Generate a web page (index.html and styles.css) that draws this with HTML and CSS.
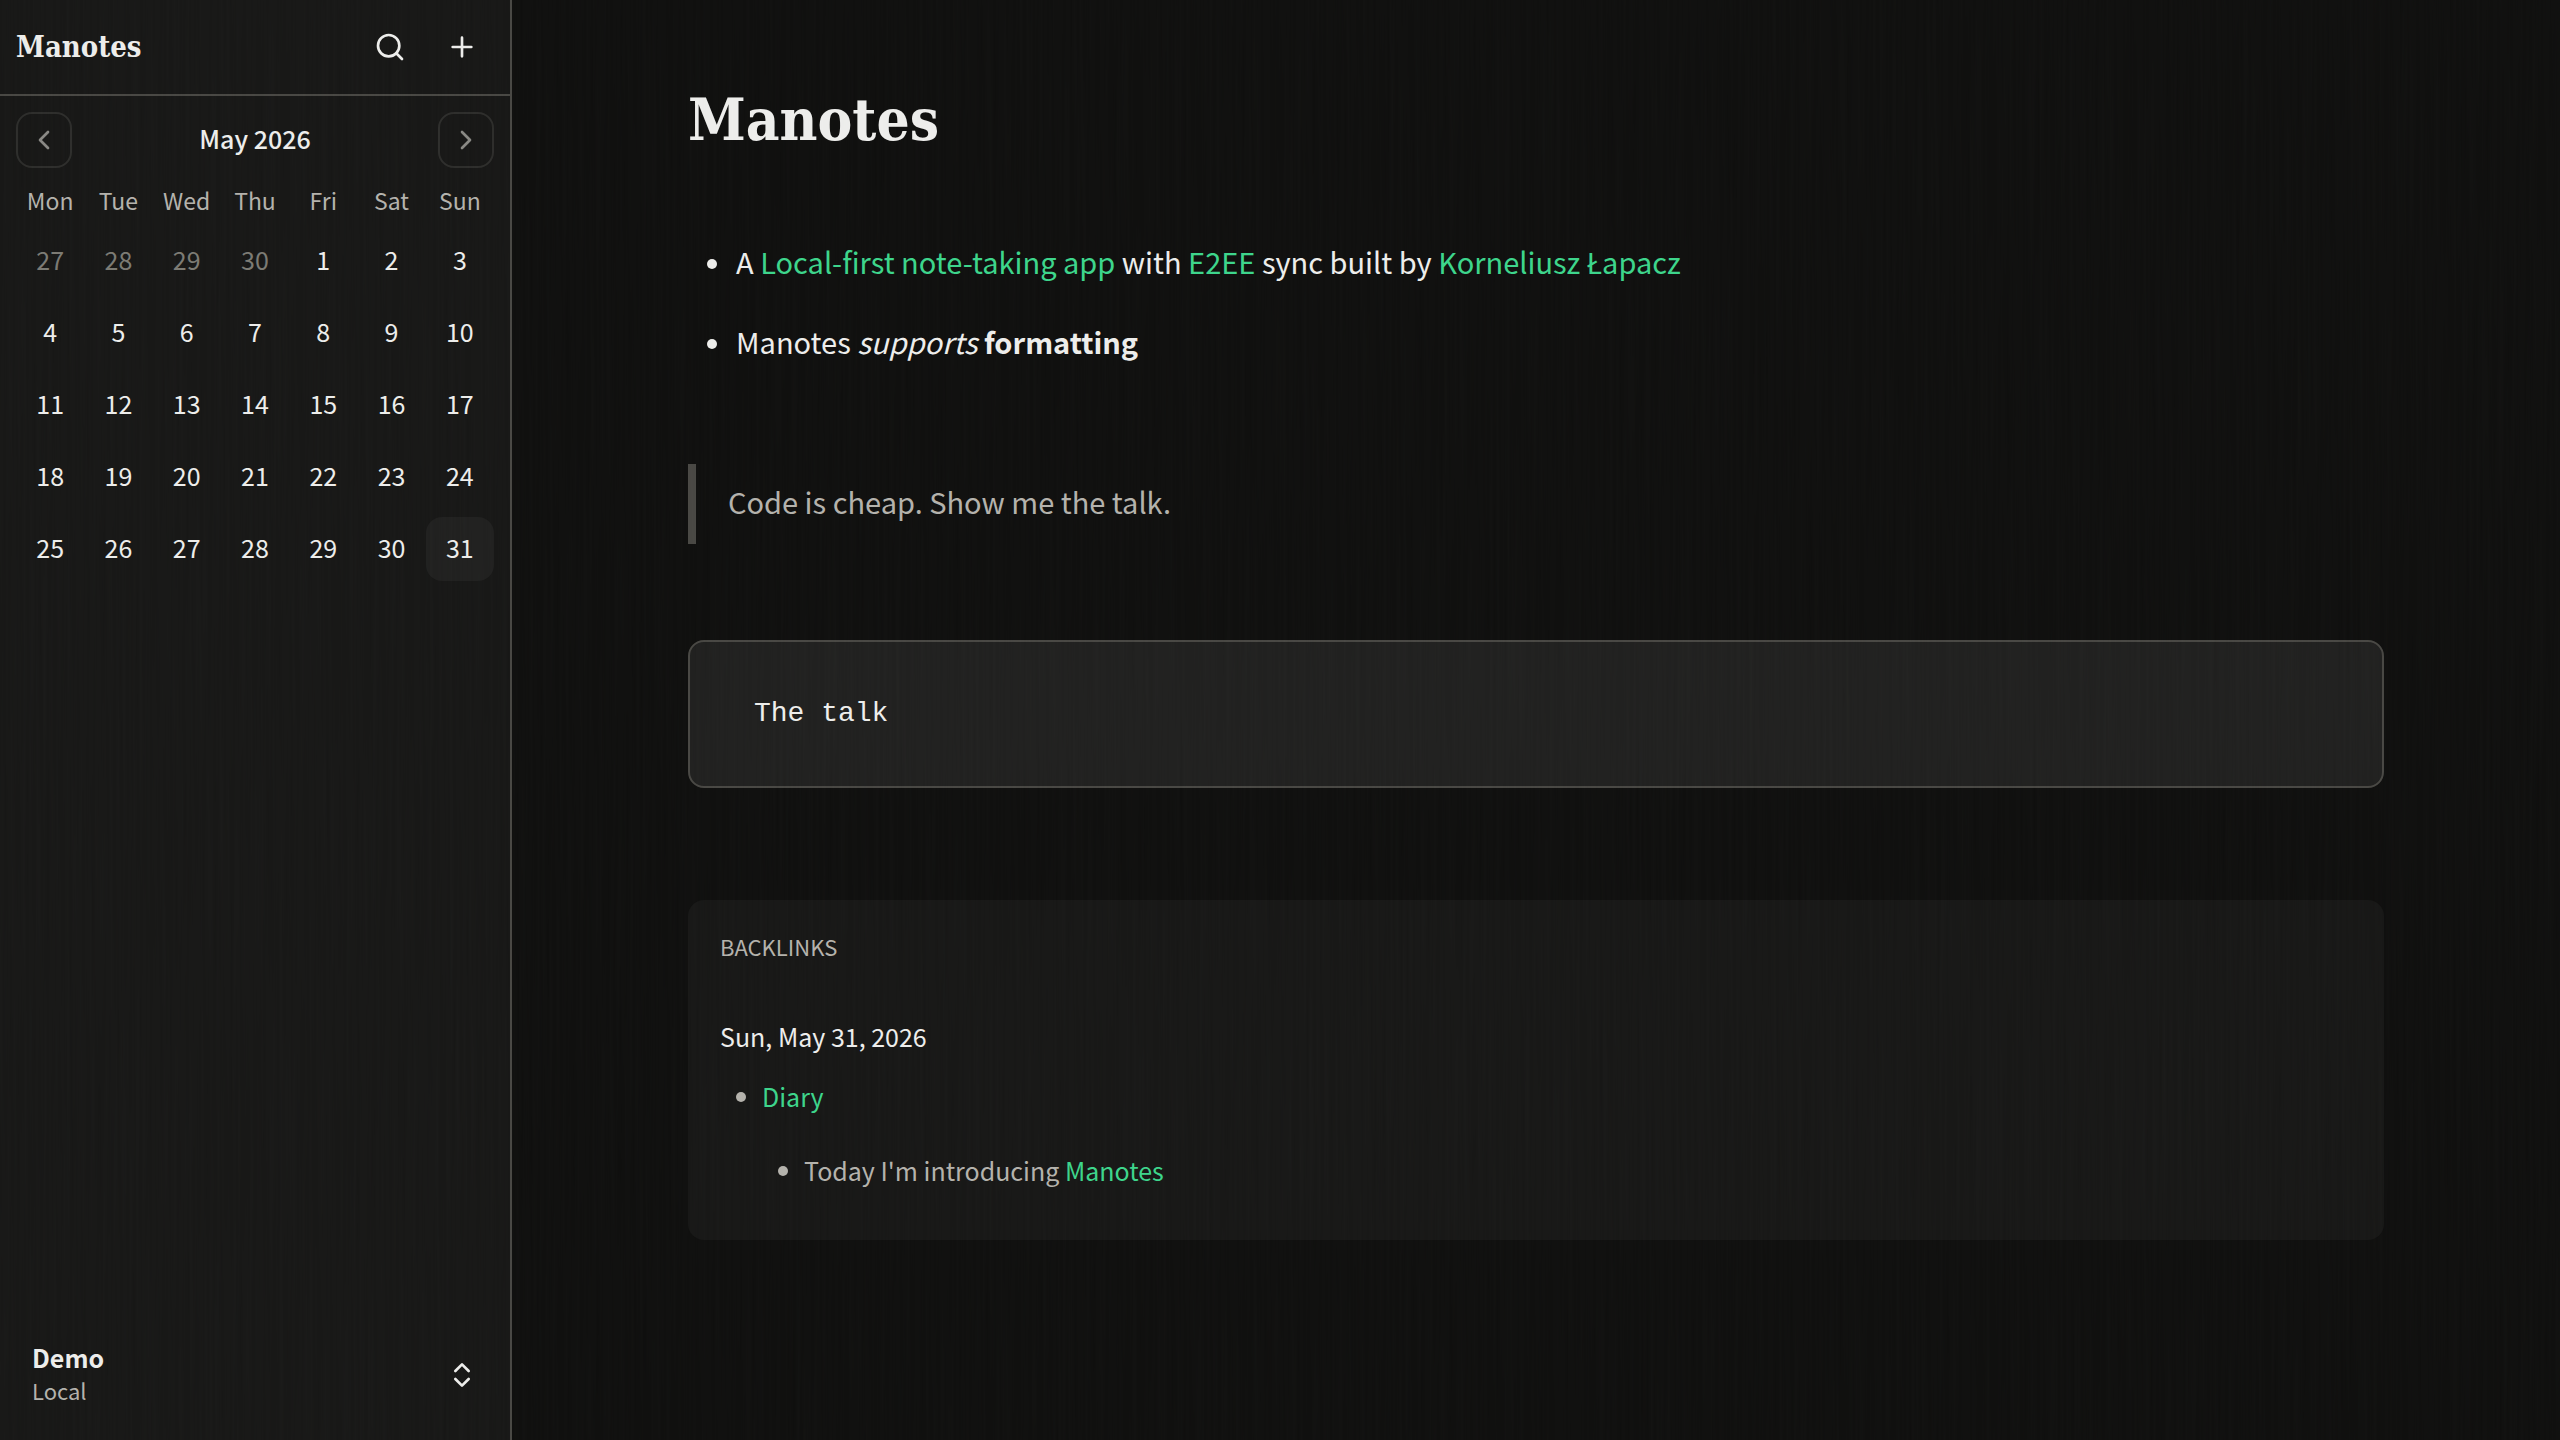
FILE: index.html
```html
<!DOCTYPE html>
<html lang="en">

<head>
  <meta charset="UTF-8" />
  <meta name="viewport" content="width=device-width, initial-scale=1.0" />
  <title>Manotes</title>
  <link rel="stylesheet" href="styles.css">
</head>

<body>
  <div class="app">
    <aside class="sidebar">
      <header class="sidebar-header">
        <a class="brand" href="#">Manotes</a>
        <button type="button" class="icon-button" aria-label="Search">
          <svg class="icon" viewBox="0 0 24 24"><circle cx="11" cy="11" r="8" /><path d="m21 21-4.3-4.3" /></svg>
        </button>
        <button type="button" class="icon-button" aria-label="New note">
          <svg class="icon" viewBox="0 0 24 24"><path d="M5 12h14M12 5v14" /></svg>
        </button>
      </header>

      <section class="calendar">
        <div class="calendar-nav">
          <button type="button" class="month-button" aria-label="Previous month">
            <svg class="icon" viewBox="0 0 24 24"><path d="m15 18-6-6 6-6" /></svg>
          </button>
          <span class="month">May 2026</span>
          <button type="button" class="month-button" aria-label="Next month">
            <svg class="icon" viewBox="0 0 24 24"><path d="m9 18 6-6-6-6" /></svg>
          </button>
        </div>
        <table class="days">
          <thead>
            <tr>
              <th>Mon</th>
              <th>Tue</th>
              <th>Wed</th>
              <th>Thu</th>
              <th>Fri</th>
              <th>Sat</th>
              <th>Sun</th>
            </tr>
          </thead>
          <tbody id="days"></tbody>
        </table>
      </section>

      <button type="button" class="account">
        <span class="account-text">
          <span class="account-name">Demo</span>
          <span class="account-type">Local</span>
        </span>
        <svg class="icon" viewBox="0 0 24 24"><path d="m7 15 5 5 5-5M7 9l5-5 5 5" /></svg>
      </button>
    </aside>

    <main class="note">
      <h1>Manotes</h1>

      <ul class="note-list">
        <li>A <a href="#">Local-first note-taking app</a> with <a href="#">E2EE</a> sync built by <a href="#">Korneliusz Łapacz</a></li>
        <li>Manotes <em>supports</em> <strong>formatting</strong></li>
      </ul>

      <blockquote>Code is cheap. Show me the talk.</blockquote>

      <pre><code>The talk</code></pre>

      <section class="backlinks">
        <h2>Backlinks</h2>
        <h3>Sun, May 31, 2026</h3>
        <ul>
          <li><a href="#">Diary</a>
            <ul>
              <li>Today I'm introducing <a href="#">Manotes</a></li>
            </ul>
          </li>
        </ul>
      </section>
    </main>
  </div>

  <!-- wood grain over the whole page -->
  <svg class="grain" aria-hidden="true">
    <filter id="grain">
      <feTurbulence type="fractalNoise" baseFrequency="0.3 0.004" numOctaves="3" seed="4" />
      <feColorMatrix type="saturate" values="0.3" />
    </filter>
    <rect width="100%" height="100%" filter="url(#grain)" />
  </svg>

  <script>
    const tbody = document.getElementById("days");
    const start = new Date(2026, 3, 27);

    for (let week = 0; week < 5; week++) {
      const row = document.createElement("tr");
      for (let day = 0; day < 7; day++) {
        const date = new Date(2026, 3, start.getDate() + week * 7 + day);
        const button = document.createElement("button");
        button.type = "button";
        button.className = "day";
        button.textContent = date.getDate();
        if (date.getMonth() !== 4) button.classList.add("outside");
        if (date.getMonth() === 4 && date.getDate() === 31) button.classList.add("today");

        const cell = document.createElement("td");
        cell.appendChild(button);
        row.appendChild(cell);
      }
      tbody.appendChild(row);
    }
  </script>
</body>

</html>
```
FILE: styles.css
```css
:root {
  --bg: #10100f;
  --panel: #181817;
  --raised: #212120;
  --border: #494844;
  --border-soft: #2e2e2c;
  --text: #eeeeec;
  --muted: #b5b3ad;
  --dim: #7c7b74;
  --link: #3dd68c;
}

* {
  box-sizing: border-box;
}

body {
  margin: 0;
  background: var(--bg);
  color: var(--text);
  font-family: "Noto Sans CJK SC", "Noto Sans", sans-serif;
  font-size: 29px;
  line-height: 42px;
}

button {
  padding: 0;
  border: none;
  background: none;
  color: inherit;
  font: inherit;
  cursor: pointer;
}

a {
  color: var(--link);
  text-decoration: none;
}

.app {
  display: flex;
  min-height: 100vh;
}

.icon {
  display: block;
  width: 32px;
  height: 32px;
  fill: none;
  stroke: currentColor;
  stroke-width: 2;
  stroke-linecap: round;
  stroke-linejoin: round;
}

/* Sidebar */
.sidebar {
  display: flex;
  flex-direction: column;
  flex: 0 0 512px;
  background: var(--panel);
  border-right: 2px solid var(--border);
  font-size: 25px;
  line-height: 40px;
}

.sidebar-header {
  display: flex;
  align-items: center;
  gap: 8px;
  height: 96px;
  padding: 0 16px;
  border-bottom: 2px solid var(--border);
}

.brand {
  flex: 1;
  color: var(--text);
  font-family: "DejaVu Serif Condensed", "DejaVu Serif", serif;
  font-size: 29px;
  font-weight: bold;
}

.icon-button {
  display: grid;
  place-items: center;
  width: 64px;
  height: 64px;
}

.calendar {
  padding: 16px;
}

.calendar-nav {
  display: flex;
  align-items: center;
  justify-content: space-between;
  margin-bottom: 8px;
}

.month {
  padding-bottom: 4px;
  font-weight: 500;
}

.month-button {
  display: grid;
  place-items: center;
  width: 56px;
  height: 56px;
  border: 2px solid var(--border-soft);
  border-radius: 16px;
  color: #8a8985;
}

.days {
  width: 100%;
  table-layout: fixed;
  border-collapse: collapse;
}

.days th {
  height: 49px;
  padding: 0 0 2px;
  color: var(--muted);
  font-size: 23px;
  font-weight: normal;
}

.days td {
  padding: 4px 0;
}

.day {
  display: block;
  width: 100%;
  height: 64px;
  padding-bottom: 4px;
  border-radius: 16px;
}

.day.outside {
  color: var(--dim);
}

.day.today {
  background: var(--raised);
}

.account {
  display: flex;
  align-items: center;
  justify-content: space-between;
  margin: auto 16px 16px;
  padding: 14px 16px;
  text-align: left;
}

.account-text {
  display: flex;
  flex-direction: column;
  padding-bottom: 4px;
}

.account-name {
  line-height: 34px;
  font-weight: bold;
}

.account-type {
  color: var(--muted);
  font-size: 22px;
  line-height: 32px;
}

/* Note */
.note {
  flex: 1;
  padding: 80px 176px;
}

.note h1 {
  margin: 0 0 80px;
  font-family: "DejaVu Serif Condensed", "DejaVu Serif", serif;
  font-size: 58px;
  line-height: 80px;
}

.note ul {
  margin: 0;
  list-style: none;
}

.note-list {
  padding: 0 0 0 48px;
}

.note li::before {
  content: "";
  float: left;
  width: 10px;
  height: 10px;
  margin: 19px 0 0 -29px;
  border-radius: 50%;
  background: currentColor;
}

.note-list li {
  padding-bottom: 6px;
}

.note-list li + li {
  margin-top: 32px;
}

.note blockquote {
  margin: 96px 0;
  padding: 16px 0 22px 32px;
  border-left: 8px solid var(--border);
  color: var(--muted);
}

.note pre {
  margin: 0;
  padding: 48px 64px;
  border: 2px solid var(--border);
  border-radius: 16px;
  background: var(--raised);
  font-family: "Liberation Mono", monospace;
  font-size: 28px;
  line-height: 48px;
}

.note code {
  font: inherit;
}

.backlinks {
  margin-top: 112px;
  padding: 30px 32px 46px;
  border-radius: 16px;
  background: var(--panel);
  color: var(--muted);
  font-size: 25px;
  line-height: 48px;
}

.backlinks h2 {
  margin: 0 0 50px;
  font-size: 22px;
  font-weight: normal;
  line-height: 32px;
  text-transform: uppercase;
}

.backlinks h3 {
  margin: 0 0 12px;
  color: var(--text);
  font-size: 25px;
  font-weight: normal;
}

.backlinks ul {
  padding: 0 0 0 42px;
}

.backlinks ul ul {
  padding-top: 26px;
}

.backlinks li::before {
  margin-top: 20px;
  margin-left: -26px;
}

.grain {
  position: fixed;
  inset: 0;
  width: 100%;
  height: 100%;
  opacity: 0.02;
  pointer-events: none;
}
```
